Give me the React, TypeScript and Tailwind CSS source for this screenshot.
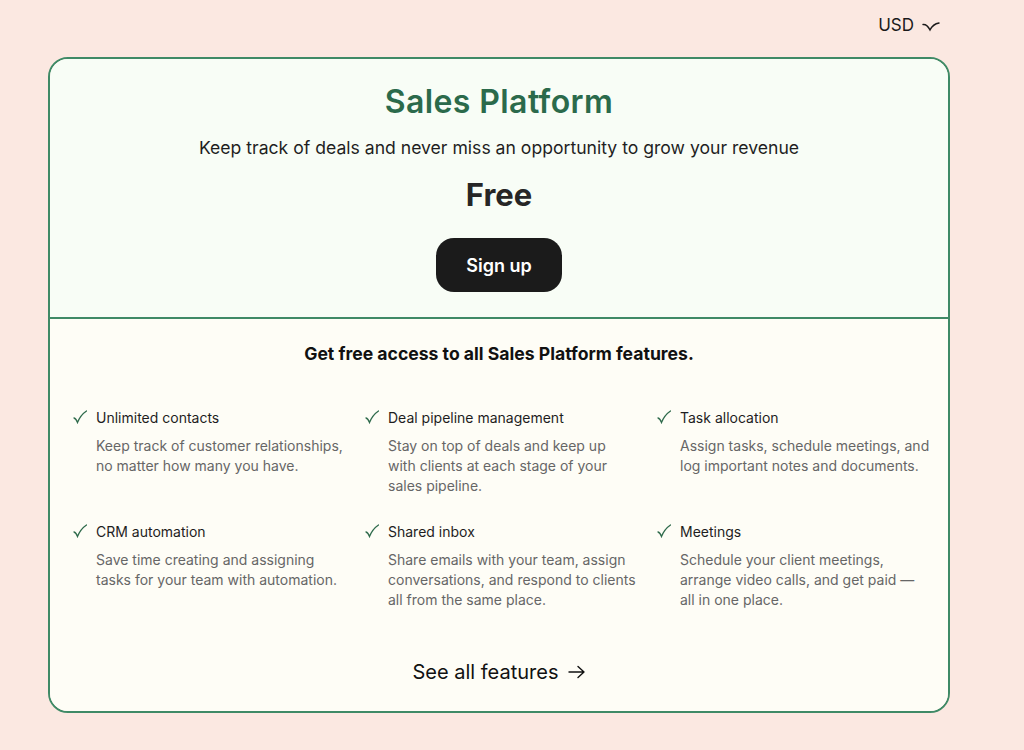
import React from "react";

const features = [
  {
    title: "Unlimited contacts",
    desc: "Keep track of customer relationships, no matter how many you have.",
  },
  {
    title: "Deal pipeline management",
    desc: "Stay on top of deals and keep up with\u00a0clients at each stage of your sales pipeline.",
  },
  {
    title: "Task allocation",
    desc: "Assign tasks, schedule meetings, and log important notes and documents.",
  },
  {
    title: "CRM automation",
    desc: "Save time creating and assigning tasks for your team with automation.",
  },
  {
    title: "Shared inbox",
    desc: "Share emails with your team, assign conversations, and respond to clients all from the same place.",
  },
  {
    title: "Meetings",
    desc: "Schedule your client meetings, arrange video calls, and get paid — all in one place.",
  },
];

function Check() {
  return (
    <svg width="14" height="14" viewBox="0 0 14 14" className="shrink-0 mt-[3px]">
      <path d="M1 8 Q3 8.5 4.5 12.5 Q7.5 5 13.5 1" fill="none" stroke="#2f6b4c" strokeWidth="1.3" strokeLinecap="round" />
    </svg>
  );
}

export default function App() {
  return (
    <div
      className="min-h-[750px] w-full bg-[#fbe8e1] pb-[38px]"
      style={{ fontFamily: "Inter, 'Noto Sans', sans-serif" }}
    >
      {/* currency switch */}
      <div className="flex justify-end pr-[84px] pt-[15px] h-[57px]">
        <button className="flex items-center gap-[8px] h-[22px] text-[17px] text-[#1a1a1a]">
          USD
          <svg width="18" height="12" viewBox="0 0 18 12" className="mt-[2px]">
            <path d="M1 3.5 Q5 3 8 9 Q11 3 17 2" fill="none" stroke="#1a1a1a" strokeWidth="1.4" strokeLinecap="round" />
          </svg>
        </button>
      </div>

      <div className="ml-[48px] w-[902px] rounded-[20px] border-2 border-[#3f8a66] overflow-hidden">
        <div className="bg-[#f8fdf6] pt-[24px] pb-[25px] flex flex-col items-center">
          <h1 className="text-[32px] leading-[38px] font-semibold text-[#2b6a4b] tracking-[0.4px]">
            Sales Platform
          </h1>
          <p className="mt-[13px] text-[17.6px] leading-[28px] text-[#1f1f1f]">
            Keep track of deals and never miss an opportunity to grow your revenue
          </p>
          <div className="mt-[15px] text-[31px] leading-[36px] font-bold text-[#262626]">Free</div>
          <button className="mt-[25px] h-[54px] w-[126px] rounded-[18px] bg-[#1b1b1b] text-white text-[18px] font-semibold">
            Sign up
          </button>
        </div>

        <div className="border-t-2 border-[#3f8a66] bg-[#fefdf6] pt-[23px] pb-[25px] flex flex-col items-center">
          <h2 className="text-[17.6px] leading-[24px] font-bold text-[#111]">
            Get free access to all Sales Platform features.
          </h2>

          <div className="mt-[41px] grid grid-cols-[292px_292px_292px] gap-y-[25px] self-stretch pl-[23px]">
            {features.map((f) => (
              <div key={f.title} className="flex gap-[9px] pr-[18px]">
                <Check />
                <div>
                  <div className="text-[14px] leading-[22px] text-[#1e1e1e]">{f.title}</div>
                  <p className="mt-[7px] text-[14px] leading-[20px] text-[#666]">{f.desc}</p>
                </div>
              </div>
            ))}
          </div>

          <a className="mt-[48px] flex items-center gap-[9px] text-[20px] leading-[28px] text-[#111]">
            See all features
            <svg width="18" height="14" viewBox="0 0 18 14">
              <path d="M1 7 H16 M10 1.5 L16 7 L10 12.5" fill="none" stroke="#111" strokeWidth="1.4" strokeLinecap="round" strokeLinejoin="round" />
            </svg>
          </a>
        </div>
      </div>
    </div>
  );
}
